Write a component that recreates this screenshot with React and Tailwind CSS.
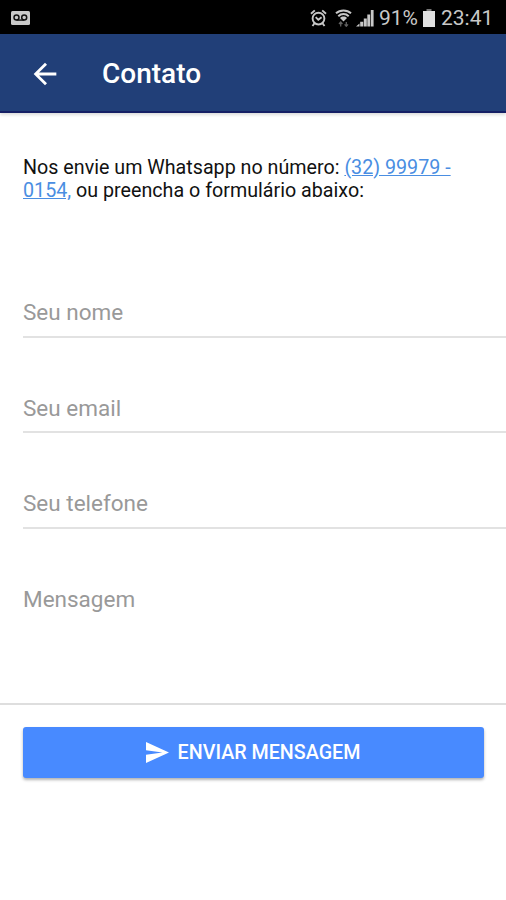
import React from 'react';

function VoicemailIcon() {
  return (
    <svg className="w-[19px] h-[14px]" viewBox="0 0 19 14" fill="none">
      <rect x="0" y="0" width="19" height="14" rx="1.5" fill="#c9c9c9" />
      <circle cx="5.5" cy="6.5" r="2.5" stroke="#111" strokeWidth="1.5" />
      <circle cx="13.2" cy="6.5" r="2.5" stroke="#111" strokeWidth="1.5" />
      <path d="M5.5 9.1h7.7" stroke="#111" strokeWidth="1.4" />
    </svg>
  );
}

function AlarmIcon() {
  return (
    <svg className="w-[17px] h-[18px]" viewBox="0 0 17 18" fill="none" stroke="#c8c8c8" strokeWidth="1.9">
      <circle cx="8.5" cy="9.6" r="5.9" />
      <path d="M5.7 8.2l2.6 2.6 3.3-2.6M1 4.8l3.8-3.4M16 4.8l-3.8-3.4M4.5 14.3l-2 2.7M12.5 14.3l2 2.7" />
    </svg>
  );
}

function WifiIcon() {
  return (
    <svg className="w-[17px] h-[18px]" viewBox="0 0 17 18" fill="none">
      <path d="M1 4.3C5 .6 12 .6 16 4.3M3.3 7.2C6.3 4.4 10.7 4.4 13.7 7.2" stroke="#c8c8c8" strokeWidth="2" />
      <path d="M5 9c2-1.9 5-1.9 7 0l-3.5 3.6z" fill="#c8c8c8" />
      <path d="M5.7 17.5v-4M4 15l1.7-2 1.7 2M11.3 13v4M9.6 15.3l1.7 2 1.7-2" stroke="#606060" strokeWidth="1.3" />
    </svg>
  );
}

function SignalIcon() {
  return (
    <svg className="w-[18px] h-[18px]" viewBox="0 0 18 18" fill="#c8c8c8">
      <path d="M0 17.5L3.5 14.5v3zM4.2 12.8h3v4.7h-3zM7.8 9.5h3v8h-3zM11.3 5.5h2.8v12h-2.8zM14.8 1h2.8v16.5h-2.8z" />
    </svg>
  );
}

function BatteryIcon() {
  return (
    <svg className="w-[12px] h-[18px]" viewBox="0 0 12 18">
      <path d="M3.5 0h5v2h-5z" fill="#777" />
      <path d="M0 2h12v16H0z" fill="#e0e0e0" />
    </svg>
  );
}

function ArrowBackIcon() {
  return (
    <svg className="w-[34px] h-[34px]" viewBox="0 0 24 24" fill="#fff">
      <path d="M20 11H7.83l5.59-5.59L12 4l-8 8 8 8 1.41-1.41L7.83 13H20v-2z" />
    </svg>
  );
}

function SendIcon() {
  return (
    <svg className="w-[23px] h-[21px]" viewBox="2 3 21 18" preserveAspectRatio="none" fill="#fff">
      <path d="M2.01 21L23 12 2.01 3 2 10l15 2-15 2z" />
    </svg>
  );
}

const fields = [
  { name: 'nome', label: 'Seu nome' },
  { name: 'email', label: 'Seu email' },
  { name: 'telefone', label: 'Seu telefone' }
];

export default function App() {
  return (
    <div className="w-[506px] h-[900px] overflow-hidden bg-white font-['Roboto',sans-serif]">
      {/* Status bar */}
      <div className="h-[34px] bg-black flex items-center justify-between pl-[11px] pr-[13px] pt-[2px]">
        <VoicemailIcon />
        <div className="flex items-center text-[21px] leading-none text-[#c8c8c8]">
          <AlarmIcon />
          <div className="ml-2 flex">
            <WifiIcon />
          </div>
          <div className="ml-[4px] flex">
            <SignalIcon />
          </div>
          <span className="ml-[5px] w-[41px] pt-px whitespace-nowrap">91%</span>
          <div className="ml-[3px] flex">
            <BatteryIcon />
          </div>
          <span className="ml-[6px] w-[52px] pt-px whitespace-nowrap">23:41</span>
        </div>
      </div>

      {/* Toolbar */}
      <header className="h-[79px] bg-[#213f78] border-b-2 border-[#151f65] flex items-center pl-7 pt-[2px] shadow-[0_2px_3px_rgba(0,0,0,0.14)]">
        <ArrowBackIcon />
        <h1 className="ml-10 text-[28px] leading-none font-medium text-white">Contato</h1>
      </header>

      <main>
        <p className="pt-[43px] pl-[23px] text-[19.7px] leading-[23px] text-[#111] whitespace-nowrap">
          Nos envie um Whatsapp no número: <a className="text-[#4a8ee2] underline">(32) 99979 -</a>
          <br />
          <a className="text-[#4a8ee2] underline">0154,</a> ou preencha o formulário abaixo:
        </p>

        <form className="pt-[40px]">
          {fields.map((field) => (
            <div key={field.name} className="ml-[23px] h-[95.7px] pt-[57px] border-b-2 border-[#e2e2e2]">
              <label className="block text-[22.5px] leading-[26px] text-[#999]">{field.label}</label>
            </div>
          ))}
          <div className="h-[176.4px] pl-[23px] pt-[57px] border-b-2 border-[#dedede]">
            <label className="block text-[22.5px] leading-[26px] text-[#999]">Mensagem</label>
          </div>
          <button
            type="button"
            className="mt-[22px] ml-[23px] w-[461px] h-[51px] rounded-[3px] bg-[#488aff] flex items-center justify-center gap-[9px] pr-px text-[19.7px] font-medium text-white shadow-[0_2px_3px_rgba(0,0,0,0.3)]"
          >
            <SendIcon />
            ENVIAR MENSAGEM
          </button>
        </form>
      </main>
    </div>
  );
}
